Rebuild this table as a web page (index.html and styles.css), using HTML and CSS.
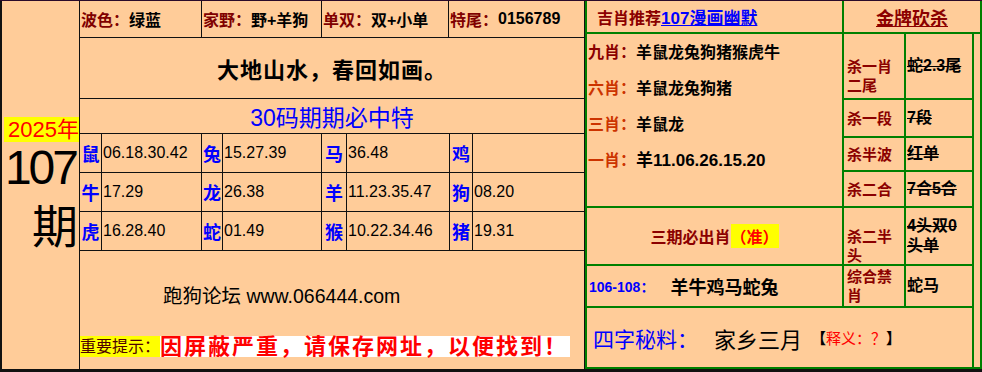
FILE: index.html
```html
<!DOCTYPE html>
<html lang="zh-CN">
<head>
<meta charset="utf-8">
<title>2025年107期</title>
<link rel="stylesheet" href="styles.css">
</head>
<body>
<div class="page">
  <div class="left">
    <div class="issue">
      <span class="year">2025年</span>
      <span class="num">107</span>
      <span class="qi">期</span>
    </div>
    <div class="main">
      <div class="attrs">
        <div class="cell"><span class="k">波色：</span>绿蓝</div>
        <div class="cell"><span class="k">家野：</span>野+羊狗</div>
        <div class="cell"><span class="k">单双：</span>双+小单</div>
        <div class="cell"><span class="k">特尾：</span>0156789</div>
      </div>
      <div class="slogan">大地山水，春回如画。</div>
      <div class="code30">30码期期必中特</div>
      <div class="zodiac">
        <div class="z">鼠</div><div class="v">06.18.30.42</div>
        <div class="z">兔</div><div class="v">15.27.39</div>
        <div class="z">马</div><div class="v">36.48</div>
        <div class="z">鸡</div><div class="v"></div>
        <div class="z">牛</div><div class="v">17.29</div>
        <div class="z">龙</div><div class="v">26.38</div>
        <div class="z">羊</div><div class="v">11.23.35.47</div>
        <div class="z">狗</div><div class="v">08.20</div>
        <div class="z">虎</div><div class="v">16.28.40</div>
        <div class="z">蛇</div><div class="v">01.49</div>
        <div class="z">猴</div><div class="v">10.22.34.46</div>
        <div class="z">猪</div><div class="v">19.31</div>
      </div>
      <div class="foot">
        <div class="site">跑狗论坛 www.066444.com</div>
        <div class="notice"><span class="tip">重要提示：</span><span class="warn">因屏蔽严重，请保存网址，以便找到！</span></div>
      </div>
    </div>
  </div>
  <div class="right">
    <div class="c h1"><span class="ji">吉肖推荐</span><a class="link" href="#">107漫画幽默</a></div>
    <div class="c h2"><span class="gold">金牌砍杀</span></div>
    <div class="c picks">
      <div class="pl"><span class="lb l9">九肖：</span>羊鼠龙兔狗猪猴虎牛</div>
      <div class="pl"><span class="lb l6">六肖：</span>羊鼠龙兔狗猪</div>
      <div class="pl"><span class="lb l3">三肖：</span>羊鼠龙</div>
      <div class="pl"><span class="lb l1">一肖：</span><span class="one">羊11.06.26.15.20</span></div>
    </div>
    <div class="c kl drop r2">杀一肖<br>二尾</div><div class="c kv r2"><s>蛇2.3尾</s></div>
    <div class="c kl r3">杀一段</div><div class="c kv r3"><s>7段</s></div>
    <div class="c kl r4">杀半波</div><div class="c kv r4"><s>红单</s></div>
    <div class="c kl r5">杀二合</div><div class="c kv r5"><s>7合5合</s></div>
    <div class="c d"></div>
    <div class="c sanqi"><span class="sq">三期必出肖</span><span class="zhun">（准）</span></div>
    <div class="c kl drop r6">杀二半<br>头</div><div class="c kv r6"><s>4头双0<br>头单</s></div>
    <div class="c range"><span class="rg">106-108：</span><span class="rz">羊牛鸡马蛇兔</span></div>
    <div class="c kl r7">综合禁<br>肖</div><div class="c kv r7">蛇马</div>
    <div class="c secret"><span class="sk">四字秘料：</span><span class="sv">家乡三月</span><span class="sy"><b>【</b><span class="red">释义：？</span><b>】</b></span></div>
  </div>
</div>
</body>
</html>
```

FILE: styles.css
```css
* { box-sizing: border-box; }
html, body { margin: 0; padding: 0; }
body {
  background: #ffffff;
  font-family: "Liberation Sans", "Noto Sans CJK SC", sans-serif;
  color: #000;
}
.page {
  width: 982px;
  height: 372px;
  display: flex;
  background: #ffcc99;
  border-top: 1px solid #2a0a2a;
  border-bottom: 3px solid #111;
}

/* ---------- left block ---------- */
.left {
  width: 585px;
  display: flex;
  border-left: 2px solid #111;
}
.issue {
  width: 78px;
  border-right: 1px solid #111;
  display: flex;
  flex-direction: column;
  align-items: flex-end;
  padding-top: 116px;
}
.year {
  display: inline-block;
  height: 25px;
  line-height: 25px;
  background: #ffff00;
  color: #ff0000;
  font-size: 22px;
  padding-left: 4px;
}
.num {
  display: block;
  margin-top: 2px;
  font-size: 48px;
  line-height: 48px;
  letter-spacing: -3px;
  padding-right: 3px;
}
.qi {
  display: block;
  margin-top: 8px;
  font-family: "Noto Sans CJK SC", sans-serif;
  font-size: 46px;
  line-height: 46px;
  padding-right: 1px;
}
.main {
  width: 505px;
  border-right: 1px solid #111;
  display: flex;
  flex-direction: column;
}
.attrs {
  height: 37px;
  display: grid;
  grid-template-columns: 121px 119px 126px 135px;
  column-gap: 1px;
  background: #111;
  border-bottom: 1px solid #111;
}
.attrs .cell {
  background: #ffcc99;
  display: flex;
  align-items: center;
  padding-left: 1px;
  font-size: 16px;
  font-weight: bold;
}
.k { color: #800000; }
.slogan {
  height: 61px;
  border-bottom: 1px solid #111;
  display: flex;
  align-items: center;
  justify-content: center;
  font-size: 22px;
  font-weight: bold;
  letter-spacing: 1px;
}
.code30 {
  height: 35px;
  border-bottom: 1px solid #111;
  display: flex;
  align-items: center;
  justify-content: center;
  color: #0000ff;
  font-size: 23px;
}
.zodiac {
  height: 117px;
  display: grid;
  grid-template-columns: 21px 99px 20px 98px 24px 102px 22px 111px;
  grid-auto-rows: 38px;
  gap: 1px;
  background: #111;
  border-bottom: 1px solid #111;
}
.zodiac > div {
  background: #ffcc99;
  display: flex;
  align-items: center;
}
.zodiac .z {
  color: #0000ff;
  font-weight: bold;
  font-size: 18px;
  justify-content: center;
}
.zodiac .v {
  font-size: 16px;
  padding-left: 1px;
}
.foot {
  flex: 1;
  padding-top: 33px;
}
.site {
  padding-left: 83px;
  font-size: 19.5px;
  line-height: 24px;
}
.notice {
  margin-top: 28px;
  display: flex;
  align-items: center;
  height: 21px;
}
.tip {
  display: inline-block;
  height: 21px;
  line-height: 21px;
  background: #ffff00;
  color: #4d0000;
  font-size: 16px;
}
.warn {
  display: inline-block;
  height: 21px;
  line-height: 21px;
  background: #ffffff;
  color: #ff0000;
  font-size: 22px;
  font-weight: bold;
  letter-spacing: 2px;
  padding-right: 2px;
}

/* ---------- right block ---------- */
.right {
  width: 397px;
  display: grid;
  grid-template-columns: 255px 60px 66px 6px;
  grid-template-rows: 31px 64px 36px 32px 34px 56px 40px 59px;
  gap: 2px;
  padding: 0 2px 2px 2px;
  background: #008000;
}
.c {
  background: #ffcc99;
  font-weight: bold;
}
.h1 {
  grid-column: 1;
  grid-row: 1;
  display: flex;
  align-items: center;
  padding-left: 10px;
}
.ji { color: #8b0000; font-size: 16px; }
.link { color: #0000ff; font-size: 17px; text-decoration: underline; }
.h2 {
  grid-column: 2 / span 3;
  grid-row: 1;
  display: flex;
  align-items: center;
  justify-content: center;
}
.gold { color: #8b0000; font-size: 18px; text-decoration: underline; }
.picks {
  grid-column: 1;
  grid-row: 2 / span 4;
  padding-top: 1px;
  padding-left: 1px;
  font-size: 16px;
}
.pl { line-height: 36px; height: 36px; }
.l9 { color: #8b0000; }
.l6, .l3 { color: #cc3300; }
.l1 { color: #cc3300; }
.one { font-size: 17px; }
.kl {
  grid-column: 2;
  color: #8b0000;
  font-size: 15px;
  line-height: 19px;
  display: flex;
  align-items: center;
  padding-left: 3px;
}
.kl.drop { padding-top: 19px; }
.kv {
  grid-column: 3;
  font-size: 16px;
  line-height: 20px;
  display: flex;
  align-items: center;
  padding-left: 1px;
}
.r2 { grid-row: 2; }
.r3 { grid-row: 3; }
.r4 { grid-row: 4; }
.r5 { grid-row: 5; }
.r6 { grid-row: 6; }
.r7 { grid-row: 7; }
.d { grid-column: 4; grid-row: 2 / span 7; }
.sanqi {
  grid-column: 1;
  grid-row: 6;
  display: flex;
  align-items: center;
  justify-content: center;
  font-size: 16px;
}
.sq { color: #8b0000; }
.zhun { color: #ff0000; background: #ffff00; }
.range {
  grid-column: 1;
  grid-row: 7;
  display: flex;
  align-items: center;
  padding-left: 2px;
}
.rg { color: #0000ff; font-size: 14px; }
.rz { font-size: 18px; margin-left: 16px; }
.secret {
  grid-column: 1 / span 3;
  grid-row: 8;
  display: flex;
  align-items: center;
  padding-left: 6px;
  font-weight: normal;
}
.sk { color: #0000ff; font-size: 21px; }
.sv { font-size: 22px; margin-left: 16px; }
.sy { font-size: 15px; margin-left: 9px; }
.sy b { font-weight: bold; }
.red { color: #ff0000; }
```
